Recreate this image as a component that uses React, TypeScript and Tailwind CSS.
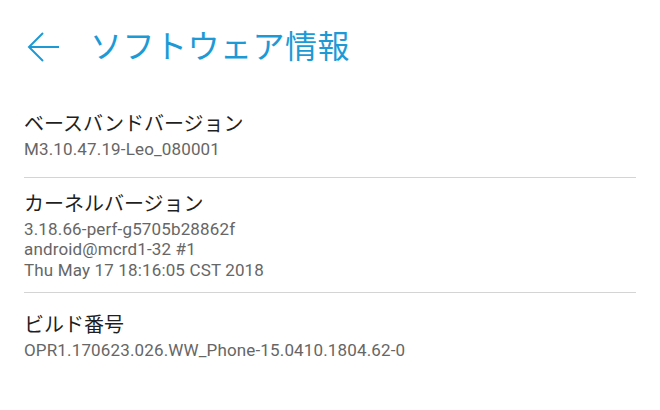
const sections = [
  {
    title: "ベースバンドバージョン",
    lines: ["M3.10.47.19-Leo_080001"],
    pad: "px-6 pt-[18px] pb-[17px]",
  },
  {
    title: "カーネルバージョン",
    lines: ["3.18.66-perf-g5705b28862f", "android@mcrd1-32 #1", "Thu May 17 18:16:05 CST 2018"],
    pad: "px-6 pt-[13px] pb-[12px]",
  },
  {
    title: "ビルド番号",
    lines: ["OPR1.170623.026.WW_Phone-15.0410.1804.62-0"],
    pad: "px-6 pt-[19px] pb-[18px]",
  },
];

export default function App() {
  return (
    <div
      className="w-[660px] h-[410px] bg-white overflow-hidden"
      style={{ fontFamily: 'Roboto, "Noto Sans CJK JP", sans-serif' }}
    >
      <div className="h-[93px] flex items-center">
        <div className="w-[90px] flex justify-start pl-[27px]">
          <svg width="34" height="32" viewBox="0 0 34 32" fill="none">
            <path d="M32 16H3M16 2L2 16l14 14" stroke="#1d9ad6" strokeWidth="2" />
          </svg>
        </div>
        <div className="text-[32px] leading-none text-[#1d9ad6] tracking-[0.5px]">ソフトウェア情報</div>
      </div>
      {sections.map((s, i) => (
        <div key={s.title}>
          {i > 0 && <div className="mx-6 h-px bg-[#d4d4d4]" />}
          <div className={s.pad}>
            <div className="text-[20px] leading-[26px] text-[#1f1f1f]">{s.title}</div>
            <div className="mt-[2px]">
              {s.lines.map((l) => (
                <div key={l} className="text-[17px] leading-[20.5px] tracking-[0.15px] text-[#666666]">
                  {l}
                </div>
              ))}
            </div>
          </div>
        </div>
      ))}
    </div>
  );
}
